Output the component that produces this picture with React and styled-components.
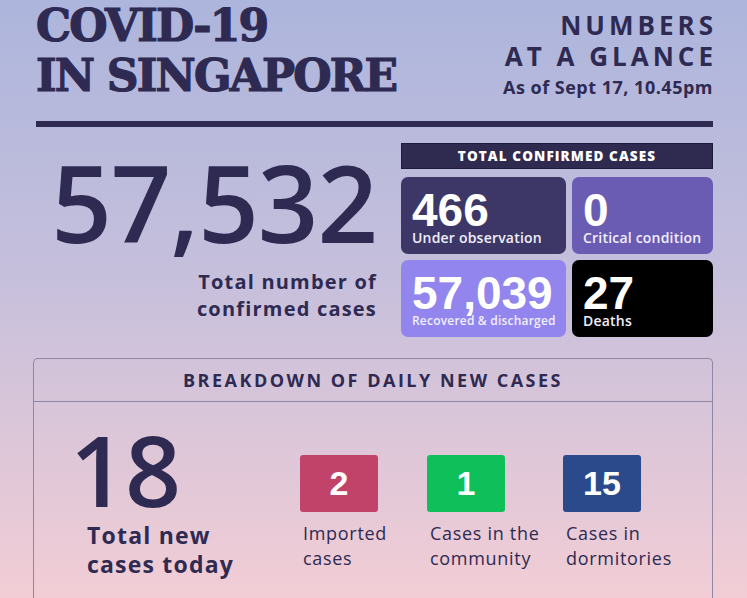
import styled, { createGlobalStyle } from 'styled-components';

const GlobalStyle = createGlobalStyle`
  html, body {
    margin: 0;
    padding: 0;
  }
  body {
    background: linear-gradient(180deg, #adb5dc 0%, #c5bfdc 45%, #f2cdd5 100%);
    height: 598px;
    overflow: hidden;
  }
`;

const ink = '#2e2a52';
const sans = `"Open Sans", "Noto Sans", sans-serif`;

const Page = styled.div`
  width: 747px;
  height: 598px;
  box-sizing: border-box;
  padding: 1px 34px 0 36px;
  display: flex;
  flex-direction: column;
  overflow: hidden;
  color: ${ink};
  font-family: ${sans};
`;

const Header = styled.header`
  display: flex;
  justify-content: space-between;
  align-items: flex-start;
`;

const Title = styled.h1`
  margin: 0;
  font-family: "DejaVu Serif", serif;
  font-weight: 700;
  font-size: 44px;
  line-height: 50px;
  letter-spacing: -1.8px;
  -webkit-text-stroke: 1.2px ${ink};
`;

const Glance = styled.div`
  text-align: right;
  padding-top: 9px;
`;

const GlanceTitle = styled.div`
  font-size: 26px;
  line-height: 31px;
  font-weight: 700;
  letter-spacing: 4px;
  margin-right: -4px;
`;

const Stamp = styled.div`
  margin-top: 5px;
  font-size: 18px;
  line-height: 20px;
  font-weight: 700;
  letter-spacing: 0.5px;
`;

const Rule = styled.hr`
  margin: 20px 0 0;
  border: 0;
  height: 6px;
  background: ${ink};
`;

const Summary = styled.section`
  display: flex;
  margin-top: 16px;
`;

const TotalBlock = styled.div`
  flex: 1;
  text-align: right;
  padding: 6px 24px 0 0;
`;

const BigNumber = styled.div`
  font-size: 106px;
  line-height: 106px;
  font-weight: 600;
  letter-spacing: -1px;
`;

const TotalLabel = styled.div`
  margin-top: 13px;
  font-size: 20px;
  line-height: 27px;
  font-weight: 700;
  letter-spacing: 1.2px;
`;

const Stats = styled.div`
  width: 312px;
`;

const StatsBar = styled.div`
  height: 26px;
  box-sizing: border-box;
  border: 1px solid #1e1a3a;
  background: #2f2a50;
  color: #fff;
  font-size: 13.5px;
  line-height: 24px;
  font-weight: 800;
  letter-spacing: 1.1px;
  text-align: center;
`;

const StatGrid = styled.div`
  margin-top: 8px;
  display: grid;
  grid-template-columns: 165px 141px;
  grid-auto-rows: 77px;
  gap: 6px;
`;

const Card = styled.div`
  border-radius: 7px;
  background: ${p => p.$bg};
  color: #fff;
  padding: 13px 11px 0;
  box-sizing: border-box;
`;

const CardNumber = styled.div`
  font-family: "Liberation Sans", Arial, sans-serif;
  font-weight: 700;
  font-size: 46px;
  line-height: 40px;
`;

const CardLabel = styled.div`
  color: #f1effa;
  font-size: ${p => p.$size || 14}px;
  line-height: 16px;
  font-weight: 600;
  letter-spacing: 0.2px;
  white-space: nowrap;
`;

const Panel = styled.section`
  flex: 1 0 auto;
  margin: 21px 0 0 -3px;
  border: 1px solid #8f87a3;
  border-bottom: none;
  border-radius: 5px 5px 0 0;
`;

const PanelHead = styled.div`
  height: 42px;
  border-bottom: 1px solid #8f87a3;
  display: flex;
  align-items: center;
  justify-content: center;
  font-size: 18px;
  font-weight: 700;
  letter-spacing: 2.5px;
`;

const PanelBody = styled.div`
  display: flex;
  padding: 18px 0 0 36px;
`;

const TodayBlock = styled.div`
  width: 230px;
`;

const TodayNumber = styled.div`
  font-size: 98px;
  line-height: 98px;
  font-weight: 600;
  letter-spacing: -1px;
`;

const TodayLabel = styled.div`
  margin-top: 3px;
  padding-left: 17px;
  font-size: 23px;
  line-height: 29px;
  font-weight: 700;
  letter-spacing: 1.2px;
`;

const Sources = styled.div`
  display: flex;
  padding-top: 35px;
`;

const Source = styled.div`
  width: ${p => p.$w}px;
`;

const SourceBox = styled.div`
  width: 78px;
  height: 57px;
  border-radius: 3px;
  background: ${p => p.$bg};
  color: #fff;
  font-family: "Liberation Sans", Arial, sans-serif;
  font-weight: 700;
  font-size: 34px;
  line-height: 57px;
  text-align: center;
`;

const SourceLabel = styled.div`
  margin-top: 9px;
  padding-left: 3px;
  font-size: 18px;
  line-height: 25px;
  letter-spacing: 0.7px;
`;

const cards = [
  { n: '466', label: 'Under observation', bg: '#3d3767' },
  { n: '0', label: 'Critical condition', bg: '#6a5cb2' },
  { n: '57,039', label: 'Recovered & discharged', bg: '#9385ee', size: 12 },
  { n: '27', label: 'Deaths', bg: '#000' },
];

const sources = [
  { n: '2', label: ['Imported', 'cases'], bg: '#c2436a', w: 127 },
  { n: '1', label: ['Cases in the', 'community'], bg: '#0fbf5a', w: 136 },
  { n: '15', label: ['Cases in', 'dormitories'], bg: '#2b4a8b', w: 120 },
];

export default function App() {
  return (
    <>
      <GlobalStyle />
      <Page>
        <Header>
          <Title>COVID-19<br />IN SINGAPORE</Title>
          <Glance>
            <GlanceTitle>NUMBERS<br />AT A GLANCE</GlanceTitle>
            <Stamp>As of Sept 17, 10.45pm</Stamp>
          </Glance>
        </Header>
        <Rule />
        <Summary>
          <TotalBlock>
            <BigNumber>57,532</BigNumber>
            <TotalLabel>Total number of<br />confirmed cases</TotalLabel>
          </TotalBlock>
          <Stats>
            <StatsBar>TOTAL CONFIRMED CASES</StatsBar>
            <StatGrid>
              {cards.map(c => (
                <Card key={c.label} $bg={c.bg}>
                  <CardNumber>{c.n}</CardNumber>
                  <CardLabel $size={c.size}>{c.label}</CardLabel>
                </Card>
              ))}
            </StatGrid>
          </Stats>
        </Summary>
        <Panel>
          <PanelHead>BREAKDOWN OF DAILY NEW CASES</PanelHead>
          <PanelBody>
            <TodayBlock>
              <TodayNumber>18</TodayNumber>
              <TodayLabel>Total new<br />cases today</TodayLabel>
            </TodayBlock>
            <Sources>
              {sources.map(s => (
                <Source key={s.n} $w={s.w}>
                  <SourceBox $bg={s.bg}>{s.n}</SourceBox>
                  <SourceLabel>{s.label[0]}<br />{s.label[1]}</SourceLabel>
                </Source>
              ))}
            </Sources>
          </PanelBody>
        </Panel>
      </Page>
    </>
  );
}
